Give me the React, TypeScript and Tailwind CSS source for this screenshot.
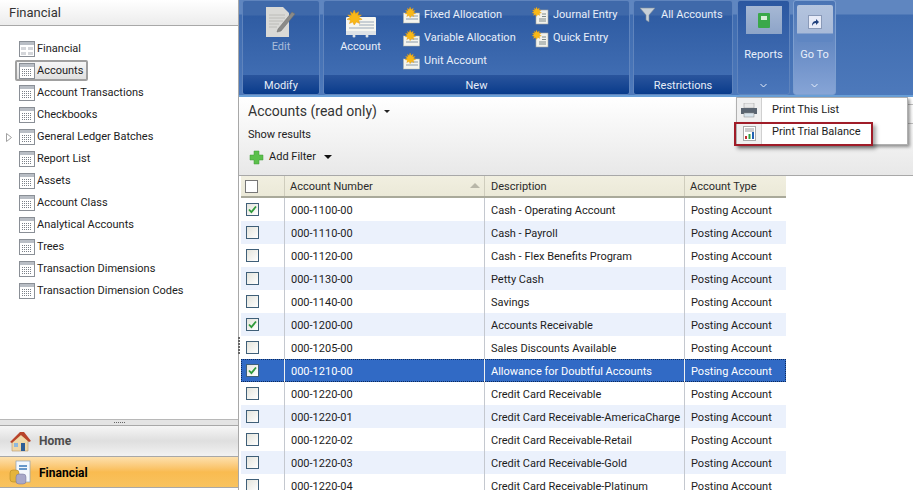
import React from "react";

const font = { fontFamily: 'Roboto,"Noto Sans",sans-serif' };

const TreeIcon = ({ grid }: { grid?: boolean }) => (
  <svg width="16" height="16" viewBox="0 0 16 16" className="shrink-0">
    <rect x="0.5" y="0.5" width="15" height="15" fill="#fff" stroke="#8a8f96" />
    <rect x="1" y="1" width="14" height="3" fill="#b9bec5" />
    {grid ? (
      <g fill="#d4d6da">
        <rect x="2" y="6" width="5" height="3" />
        <rect x="9" y="6" width="5" height="3" />
        <rect x="2" y="11" width="5" height="3" />
        <rect x="9" y="11" width="5" height="3" />
      </g>
    ) : (
      <g stroke="#7a8088" strokeDasharray="1 1">
        <path d="M3 6.5h10M3 8.5h10M3 10.5h10M3 12.5h10" />
      </g>
    )}
  </svg>
);

const Sun = ({ x = 0, y = 0, s = 1 }: { x?: number; y?: number; s?: number }) => (
  <g transform={`translate(${x} ${y}) scale(${s})`}>
    <path
      d="M6 0l1.2 3 2.6-1.6-.8 3 3-.3-2 2.2 2.6 1.5-3 .7 1 2.8-2.8-1.3L6 12.5 4.8 10l-2.8 1.3 1-2.8-3-.7 2.6-1.5-2-2.2 3 .3-.8-3L4.8 3z"
      fill="#f8b818"
      stroke="#e89a10"
      strokeWidth=".4"
    />
  </g>
);

const NewAcc = ({ big }: { big?: boolean }) =>
  big ? (
    <svg width="30" height="28" viewBox="0 0 30 28">
      <rect x="0" y="7" width="30" height="18" rx="1" fill="#f6f6f0" />
      <path d="M13 12h15M13 15h15M3 18h25" stroke="#9aa8b8" strokeWidth="1.2" />
      <path d="M0 21h30v4H0z" fill="#dfe3e6" />
      <circle cx="8" cy="26" r="1.5" fill="#dfe3e6" />
      <circle cx="21" cy="26" r="1.5" fill="#dfe3e6" />
      <Sun x={1} y={0} s={1.2} />
    </svg>
  ) : (
    <svg width="17" height="17" viewBox="0 0 17 17">
      <rect x="0.5" y="6" width="16" height="10" fill="#f4f4ee" stroke="#b8b8a8" strokeWidth=".5" />
      <path d="M7 9h8M3 12h12" stroke="#8a9aa8" />
      <Sun x={2} y={0} s={0.85} />
    </svg>
  );

const Journal = () => (
  <svg width="17" height="18" viewBox="0 0 17 18">
    <rect x="4" y="3" width="12" height="14" fill="#f2f2ec" stroke="#a8a8a0" strokeWidth=".6" />
    <path d="M10 7h4M10 9.5h4M7 12h7M7 14h7" stroke="#7e8a8a" />
    <Sun x={0} y={0} s={0.75} />
  </svg>
);

const NewRow = ({ label, icon }: { label: string; icon: React.ReactNode }) => (
  <div className="flex h-[23px] items-center gap-[4px] whitespace-nowrap text-[#e8effa]">
    <span className="flex w-[17px] justify-center">{icon}</span>
    <span>{label}</span>
  </div>
);

const Group = ({ label, w, children }: { label: string; w: string; children: React.ReactNode }) => (
  <div className={`flex h-[95px] flex-col overflow-hidden rounded-[3px] border border-[#5f84bd] bg-[linear-gradient(to_bottom,#3f69aa_0,#3f69aa_14px,#2f5ca3_15px,#4572b7_100%)] ${w}`}>
    <div className="min-h-0 flex-1">{children}</div>
    <div className="flex h-[19px] items-center justify-center bg-gradient-to-b from-[#2a559d] to-[#073b8b] pt-[3px] text-[#e6edf8]">{label}</div>
  </div>
);

const Chevron = () => (
  <svg width="7" height="5" viewBox="0 0 7 5">
    <path d="M.5 1l3 3 3-3" fill="none" stroke="#e8effa" />
  </svg>
);

const tree = ["Financial", "Accounts", "Account Transactions", "Checkbooks", "General Ledger Batches", "Report List", "Assets", "Account Class", "Analytical Accounts", "Trees", "Transaction Dimensions", "Transaction Dimension Codes"];

const rows: [string, string, boolean][] = [
  ["000-1100-00", "Cash - Operating Account", true],
  ["000-1110-00", "Cash - Payroll", false],
  ["000-1120-00", "Cash - Flex Benefits Program", false],
  ["000-1130-00", "Petty Cash", false],
  ["000-1140-00", "Savings", false],
  ["000-1200-00", "Accounts Receivable", true],
  ["000-1205-00", "Sales Discounts Available", false],
  ["000-1210-00", "Allowance for Doubtful Accounts", true],
  ["000-1220-00", "Credit Card Receivable", false],
  ["000-1220-01", "Credit Card Receivable-AmericaCharge", false],
  ["000-1220-02", "Credit Card Receivable-Retail", false],
  ["000-1220-03", "Credit Card Receivable-Gold", false],
  ["000-1220-04", "Credit Card Receivable-Platinum", false],
];

const Check = ({ on }: { on: boolean }) => (
  <span className="flex h-[13px] w-[13px] items-center justify-center border border-[#3f5f78] bg-gradient-to-br from-[#e4e4dc] to-white">
    {on && (
      <svg width="9" height="9" viewBox="0 0 9 9">
        <path d="M1 4.5l2.4 2.6L8 1.5" fill="none" stroke="#2f9a3a" strokeWidth="1.8" />
      </svg>
    )}
  </span>
);

export default function App() {
  return (
    <div className="flex h-[490px] w-[913px] overflow-hidden bg-white text-[11px] text-[#1c1c1c]" style={font}>
      {/* Left navigation */}
      <aside className="flex w-[239px] shrink-0 flex-col border-r border-[#a8a8a8]">
        <div className="flex h-[26px] shrink-0 items-center border-b border-[#a8a8a8] bg-gradient-to-b from-[#ffffff] to-[#ececec] pl-[9px] text-[13px] text-[#333]">Financial</div>
        <div className="flex min-h-0 flex-1 flex-col pt-[12px]">
          {tree.map((t, i) => (
            <div key={t} className="relative flex h-[22px] shrink-0 items-center pl-[19px]">
              {i === 4 && (
                <svg width="6" height="9" viewBox="0 0 6 9" className="absolute left-[6px] top-[7px]">
                  <path d="M.5.5l5 4-5 4z" fill="#fff" stroke="#a0a0a0" />
                </svg>
              )}
              {i === 1 && <span className="absolute left-[15px] top-0 h-[21px] w-[73px] rounded-[2px] border-2 border-[#a0a0a0] bg-gradient-to-b from-[#f6f6f6] to-[#e0e0e0]" />}
              <span className="relative flex items-center gap-[2px] whitespace-nowrap">
                <TreeIcon grid={i === 0} />
                {t}
              </span>
            </div>
          ))}
        </div>
        <div className="flex h-[6px] shrink-0 items-center justify-center border-t border-[#b8b8b8] bg-[#e4e4e4]">
          <span className="flex gap-[1px]">
            {[0, 1, 2, 3, 4, 5].map((i) => (
              <span key={i} className="h-[1px] w-[1px] bg-[#666]" />
            ))}
          </span>
        </div>
        <div className="flex h-[32px] shrink-0 items-center border-t border-b border-[#a8a8a8] bg-gradient-to-b from-[#f6f6f6] via-[#dfdfdf] to-[#f2f2f2] pl-[9px] text-[12px] font-bold text-[#4c4c4c]">
          <svg width="23" height="23" viewBox="0 0 23 23" className="mr-[7px]">
            <path d="M3 11v10h16V10l-8-6z" fill="#f0d8a8" stroke="#b89868" strokeWidth=".6" />
            <path d="M1 12L11 2h4l7 9-2 1-8-7-9 8z" fill="#b8432a" />
            <rect x="12" y="13" width="4" height="8" fill="#2e5e96" />
            <rect x="5" y="13" width="4" height="4" fill="#8fb8dd" />
          </svg>
          Home
        </div>
        <div className="mb-[2px] flex h-[31px] shrink-0 items-center border-b border-[#a8a8a8] bg-gradient-to-b from-[#fde0ac] via-[#f9bb50] to-[#f8c35f] pl-[9px] pt-[1px] text-[12px] font-bold text-black">
          <svg width="23" height="25" viewBox="0 0 23 25" className="mr-[7px]">
            <rect x="7" y="1" width="14" height="21" fill="#f4f8fc" stroke="#8aa0b8" strokeWidth=".7" />
            <path d="M10 6h8M10 9h8" stroke="#3a78b8" strokeWidth="1.5" />
            <rect x="1" y="10" width="9" height="12" rx="3" fill="#e4b43c" stroke="#a88020" strokeWidth=".5" />
            <rect x="7" y="14" width="10" height="10" rx="3" fill="#a8a8c8" stroke="#707098" strokeWidth=".5" />
          </svg>
          Financial
        </div>
      </aside>

      {/* Right side */}
      <main className="relative flex min-w-0 flex-1 flex-col">
        {/* Ribbon */}
        <div className="flex h-[97px] shrink-0 gap-[3px] border-b-2 border-[#6aa0d8] bg-[linear-gradient(to_bottom,#5f86c0_0,#5f86c0_14px,#3f6cb0_15px,#4d79bb_100%)] pl-[3px]">
          <Group label="Modify" w="w-[78px]">
            <div className="flex flex-col items-center pt-[6px] text-[#a9bcda]">
              <svg width="30" height="30" viewBox="0 0 30 30">
                <path d="M0 0h17l6 6v24H0z" fill="#d9d9d6" />
                <path d="M3 8h16M3 11h16M3 14h14M3 17h10M3 20h8" stroke="#bcbcb8" />
                <path d="M12 22L26 5l3 2-14 17-4 1z" fill="#8a8a88" stroke="#6c6c6a" strokeWidth=".5" />
              </svg>
              <span className="mt-[2px]">Edit</span>
            </div>
          </Group>
          <Group label="New" w="w-[307px]">
            <div className="flex pt-[3px] text-[#e8effa]">
              <div className="flex w-[70px] flex-col items-center pl-[3px] pt-[6px]">
                <NewAcc big />
                <span className="mt-[1px]">Account</span>
              </div>
              <div className="w-[138px] pl-[9px]">
                <NewRow label="Fixed Allocation" icon={<NewAcc />} />
                <NewRow label="Variable Allocation" icon={<NewAcc />} />
                <NewRow label="Unit Account" icon={<NewAcc />} />
              </div>
              <div>
                <NewRow label="Journal Entry" icon={<Journal />} />
                <NewRow label="Quick Entry" icon={<Journal />} />
              </div>
            </div>
          </Group>
          <Group label="Restrictions" w="w-[100px]">
            <div className="flex items-center gap-[6px] pl-[6px] pt-[6px] text-[#e8effa]">
              <svg width="15" height="16" viewBox="0 0 15 16">
                <path d="M0 1h15L9 8v7l-3-2V8z" fill="#c8d0d8" stroke="#7a8a9a" strokeWidth=".6" />
              </svg>
              All Accounts
            </div>
          </Group>
          <div className="ml-[1px] flex h-[95px] w-[53px] flex-col items-center rounded-[3px] border border-[#5f84bd] bg-gradient-to-b from-[#2b57a0] to-[#4a76ba] text-[#e8effa]">
            <div className="mt-[5px] flex h-[28px] w-[36px] items-center justify-center bg-gradient-to-b from-[#a6b8d4] to-[#8da4c8]">
              <svg width="12" height="15" viewBox="0 0 12 15">
                <rect x="0" y="0" width="12" height="15" rx="1" fill="#3aa84a" />
                <rect x="3" y="3" width="6" height="4" fill="#d8f0d8" />
              </svg>
            </div>
            <span className="mt-[13px]">Reports</span>
            <span className="mt-[19px] flex"><Chevron /></span>
          </div>
          <div className="flex h-[95px] w-[43px] flex-col items-center rounded-[3px] border border-[#7d9fd0] bg-gradient-to-b from-[#4a74b4] to-[#86a4d6] text-[#e8effa]">
            <div className="mt-[4px] flex h-[37px] w-[36px] flex-col items-center rounded-[2px] bg-[linear-gradient(to_bottom,#b4c4de_0,#a8bad8_28px,#5f86c2_29px,#5f86c2_100%)]">
              <span className="mt-[10px] flex h-[14px] w-[14px] items-center justify-center border border-[#8a9ab8] bg-[#e8ecf8]">
                <svg width="10" height="10" viewBox="0 0 10 10">
                  <path d="M2 9C2 5 4 4 6 4V2l3 3-3 3V6C4 6 3 7 2 9z" fill="#20407c" />
                </svg>
              </span>
            </div>
            <span className="mt-[5px]">Go To</span>
            <span className="mt-[19px] flex"><Chevron /></span>
          </div>
        </div>

        {/* Toolbar */}
        <div className="relative flex h-[79px] shrink-0 flex-col border-b border-[#a8a8a8] bg-gradient-to-b from-white to-[#e8e8e8] pl-[9px]">
          <div className="mt-[5px] flex h-[18px] items-center gap-[7px] text-[14px] text-[#333]">
            Accounts (read only)
            <span className="h-0 w-0 border-x-[3px] border-t-[3px] border-x-transparent border-t-[#222]" />
          </div>
          <div className="mt-[8px] flex h-[14px] items-center text-[#222]">Show results</div>
          <div className="mt-[6px] flex h-[18px] items-center">
            <svg width="15" height="15" viewBox="0 0 15 15" className="mr-[5px] ml-[1px]">
              <path d="M5 1h5v4h4v5h-4v4H5v-4H1V5h4z" fill="#5cc04c" stroke="#3e9a34" strokeWidth=".5" />
            </svg>
            <span>Add Filter</span>
            <span className="ml-[8px] h-0 w-0 border-x-[4px] border-t-[4px] border-x-transparent border-t-[#111]" />
          </div>
          <span className="absolute right-0 top-[7px] h-[20px] w-[6px] border-y border-[#bdbdbd]" />
        </div>

        {/* Grid */}
        <div className="ml-[2px] min-h-0 w-[545px] flex-1 overflow-hidden">
          <div className="flex h-[22px] border-b-2 border-[#a9a99a] bg-gradient-to-b from-[#f1efe0] to-[#ebe9d8] text-[#2a2a2a]">
            <div className="flex w-[44px] items-center border-r border-[#cfcdbd] pl-[4px]">
              <span className="h-[13px] w-[13px] border border-[#777] bg-white" />
            </div>
            <div className="relative flex w-[200px] items-center border-r border-[#cfcdbd] pl-[5px] pt-[2px]">
              Account Number
              <span className="absolute right-[4px] top-[7px] h-0 w-0 border-x-[5px] border-b-[5px] border-x-transparent border-b-[#b8b6a8]" />
            </div>
            <div className="flex w-[200px] items-center border-r border-[#cfcdbd] pl-[6px] pt-[2px]">Description</div>
            <div className="flex w-[101px] items-center pl-[5px] pt-[2px]">Account Type</div>
          </div>
          <div>
            {rows.map(([n, d, c], i) => {
              const sel = i === 7;
              const base = sel ? "bg-[#316ac5] text-white outline outline-1 -outline-offset-1 outline-dotted outline-[#0c2a5c]" : i % 2 === 1 ? "bg-[#ebf1fc]" : "bg-white";
              const line = sel ? "border-[#f0f0f0]" : "border-[#c4c8cf]";
              return (
                <div key={n} className={`flex h-[23px] ${base}`}>
                  <div className={`flex w-[44px] items-center border-r pl-[5px] ${line}`}>
                    <Check on={c} />
                  </div>
                  <div className={`flex w-[200px] items-center whitespace-nowrap border-r pl-[6px] pt-[3px] ${line}`}>{n}</div>
                  <div className={`flex w-[200px] items-center whitespace-nowrap border-r pl-[6px] pt-[3px] ${line}`}>{d}</div>
                  <div className="flex w-[101px] items-center whitespace-nowrap pl-[6px] pt-[3px]">Posting Account</div>
                </div>
              );
            })}
          </div>
        </div>

        {/* Splitter grip */}
        <div className="absolute left-[-1px] top-[337px] flex flex-col gap-[1px]">
          {[0, 1, 2, 3, 4, 5].map((i) => (
            <span key={i} className="h-[2px] w-[2px] bg-[#666]" />
          ))}
        </div>

        {/* Popup menu */}
        <div className="absolute left-[497px] top-[97px] w-[172px] border border-[#b0b0b0] bg-white shadow-[2px_2px_3px_rgba(0,0,0,0.4)]">
          <div className="flex h-[24px] items-center">
            <span className="flex h-full w-[25px] items-center justify-center border-r border-[#d0d0d0] bg-[#f0f0f0]">
              <svg width="16" height="15" viewBox="0 0 16 15">
                <rect x="3" y="0" width="10" height="5" fill="#e8e8e8" stroke="#999" strokeWidth=".5" />
                <rect x="0" y="5" width="16" height="6" fill="#5a6470" />
                <rect x="3" y="10" width="10" height="4" fill="#d8e4ec" stroke="#888" strokeWidth=".5" />
              </svg>
            </span>
            <span className="pl-[10px]">Print This List</span>
          </div>
          <div className="flex h-[22px] items-center">
            <span className="flex h-full w-[25px] items-center justify-center border-r border-[#d0d0d0] bg-[#f0f0f0]">
              <svg width="13" height="15" viewBox="0 0 13 15">
                <rect x="0.5" y="0.5" width="12" height="14" fill="#fff" stroke="#aaa" />
                <path d="M2 3h9M2 5h9" stroke="#999" />
                <rect x="2" y="10" width="2" height="3" fill="#c03030" />
                <rect x="5.5" y="8" width="2" height="5" fill="#30a040" />
                <rect x="9" y="6" width="2" height="7" fill="#2060b0" />
              </svg>
            </span>
            <span className="pb-[1px] pl-[10px]">Print Trial Balance</span>
          </div>
        </div>
        <div className="absolute left-[495px] top-[122px] h-[24px] w-[139px] border-2 border-[#a01c28] shadow-[3px_3px_4px_rgba(0,0,0,0.35)]" />
      </main>
    </div>
  );
}
